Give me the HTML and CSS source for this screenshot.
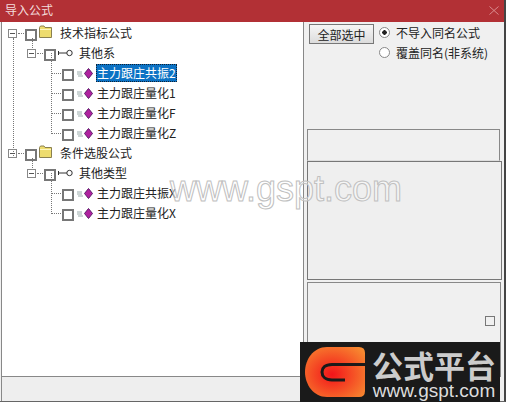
FILE: index.html
```html
<!DOCTYPE html>
<html lang="en">
<head>
    <meta charset="UTF-8">
    <title>导入公式</title>
    <link rel="stylesheet" href="styles.css">
</head>
<body>
    <svg class="defs" width="0" height="0">
        <symbol id="folder" viewBox="0 0 15 13">
            <path d="M1.500 12.500V2.500L2.500 1H6L7 2.500H13.500V12.500Z" fill="#eedc6e" stroke="#8a8050"/>
            <path d="M2 4H13V5H2Z" fill="#fdf6c0"/>
        </symbol>
        <symbol id="key" viewBox="0 0 15 8">
            <path d="M0.500 2V6M0.500 4H9" fill="none" stroke="#333"/>
            <circle cx="11.500" cy="4" r="2.700" fill="#fff" stroke="#333"/>
        </symbol>
        <symbol id="gem" viewBox="0 0 16 11">
            <path d="M0 4H5M0 6H5M1 8H6" stroke="#9aa" fill="none"/>
            <path d="M11.500 0.500L15.500 5.500L11.500 10.500L7.500 5.500Z" fill="#b0229f" stroke="#5c1a6a"/>
        </symbol>
    </svg>

    <div class="window">
        <div class="titlebar">
            <span class="title">导入公式</span>
            <svg class="close" width="10" height="9" viewBox="0 0 10 9"><path d="M0.500 0.500L9.500 8.500M9.500 0.500L0.500 8.500" stroke="#d98a8d"/></svg>
        </div>

        <div class="main">
            <div class="tree">
                <div class="row lvl0 top">
                    <span class="exp"></span><span class="check"></span>
                    <svg class="ico-folder"><use href="#folder"/></svg>
                    <span class="label">技术指标公式</span>
                </div>
                <div class="row lvl1 group">
                    <span class="exp"></span><span class="check"></span>
                    <svg class="ico-key"><use href="#key"/></svg>
                    <span class="label">其他系</span>
                </div>
                <div class="row lvl2">
                    <span class="check"></span><svg class="ico-gem"><use href="#gem"/></svg>
                    <span class="label selected">主力跟庄共振2</span>
                </div>
                <div class="row lvl2">
                    <span class="check"></span><svg class="ico-gem"><use href="#gem"/></svg>
                    <span class="label">主力跟庄量化1</span>
                </div>
                <div class="row lvl2">
                    <span class="check"></span><svg class="ico-gem"><use href="#gem"/></svg>
                    <span class="label">主力跟庄量化F</span>
                </div>
                <div class="row lvl2 last">
                    <span class="check"></span><svg class="ico-gem"><use href="#gem"/></svg>
                    <span class="label">主力跟庄量化Z</span>
                </div>
                <div class="row lvl0">
                    <span class="exp"></span><span class="check"></span>
                    <svg class="ico-folder"><use href="#folder"/></svg>
                    <span class="label">条件选股公式</span>
                </div>
                <div class="row lvl1 group">
                    <span class="exp"></span><span class="check"></span>
                    <svg class="ico-key"><use href="#key"/></svg>
                    <span class="label">其他类型</span>
                </div>
                <div class="row lvl2">
                    <span class="check"></span><svg class="ico-gem"><use href="#gem"/></svg>
                    <span class="label">主力跟庄共振X</span>
                </div>
                <div class="row lvl2 last">
                    <span class="check"></span><svg class="ico-gem"><use href="#gem"/></svg>
                    <span class="label">主力跟庄量化X</span>
                </div>
            </div>

            <div class="side">
                <div class="actions">
                    <button class="btn">全部选中</button>
                    <div class="radios">
                        <div class="radio-row"><span class="radio on"></span>不导入同名公式</div>
                        <div class="radio-row"><span class="radio"></span>覆盖同名(非系统)</div>
                    </div>
                </div>
                <div class="box box-a"></div>
                <div class="box box-b"></div>
                <div class="box box-c"><span class="small-check"></span></div>
            </div>
        </div>

        <div class="statusbar"></div>
    </div>

    <div class="wm wm1">分析家公式网www.70822.com&nbsp;&nbsp;分析家公式网</div>
    <div class="wm wm2">分析家公式网www.70822.com&nbsp;&nbsp;分析家公式网</div>
    <div class="wm wm3">分析家公式网www.70822.com&nbsp;&nbsp;分析家公式网</div>
    <div class="wm wm4">分析家公式网www.70822.com&nbsp;&nbsp;分析家公式网</div>
    <div class="wm wm5">分析家公式网www.70822.com&nbsp;&nbsp;分析家公式网</div>
    <div class="gspt">www.gspt.com</div>

    <div class="brand">
        <svg class="brand-g" width="60" height="50" viewBox="0 0 60 50">
            <defs>
                <radialGradient id="glow" cx="0.45" cy="0.55" r="0.7">
                    <stop offset="0" stop-color="#f3141a"/>
                    <stop offset="1" stop-color="#f78a30"/>
                </radialGradient>
            </defs>
            <path d="M22 0H54Q60 0 60 6V44Q60 50 54 50H22C8 50 0 37 0 25C0 13 8 0 22 0Z" fill="url(#glow)"/>
            <path d="M60 17.500H27C20 17.500 17 21 17 25C17 29 20 33 27 33H40" fill="none" stroke="#1a1a1a" stroke-width="3"/>
        </svg>
        <div class="brand-text">
            <div class="brand-name">公式平台</div>
            <div class="brand-url">www.gspt.com</div>
        </div>
    </div>
</body>
</html>
```

FILE: styles.css
```css
html, body {
    margin: 0;
    padding: 0;
    background: #fff;
}

body {
    width: 510px;
    height: 405px;
    position: relative;
    overflow: hidden;
    font-family: "Noto Sans CJK SC", "Liberation Sans", sans-serif;
    font-size: 12px;
    color: #222;
}

.defs {
    position: absolute;
}

.window {
    width: 504px;
    height: 401px;
    display: flex;
    flex-direction: column;
    border-right: 2px solid #444;
    border-bottom: 1px solid #666;
    background: #f0f0f0;
}

.titlebar {
    height: 22px;
    flex: none;
    background: #b23035;
    display: flex;
    align-items: center;
    justify-content: space-between;
    padding: 0 4px 2px 5px;
    box-sizing: border-box;
    color: #f3dcdc;
}

.title {
    font-size: 12px;
    line-height: 18px;
}

.close {
    margin-right: 1px;
}

.main {
    flex: 1;
    display: flex;
    min-height: 0;
}

.tree {
    width: 301px;
    flex: none;
    margin-left: 1px;
    background: #fff;
    border-left: 1px solid #888;
    border-right: 1px solid #888;
    border-bottom: 1px solid #888;
    padding-top: 1px;
    overflow: hidden;
}

.row {
    height: 20px;
    display: flex;
    align-items: center;
    position: relative;
}

.lvl0 { padding-left: 6px; }
.lvl1 { padding-left: 25px; }
.lvl2 { padding-left: 60px; }

.exp {
    width: 9px;
    height: 9px;
    border: 1px solid #888;
    box-sizing: border-box;
    background: linear-gradient(#555, #555) center / 5px 1px no-repeat;
    margin-right: 8px;
    margin-top: 1px;
    flex: none;
}

.check {
    width: 12px;
    height: 12px;
    border: 2px solid #777;
    box-sizing: border-box;
    background: #fff;
    margin-top: 4px;
    flex: none;
}

.ico-folder {
    width: 15px;
    height: 13px;
    margin: -3px 0 0 1px;
    flex: none;
}

.ico-key {
    width: 15px;
    height: 8px;
    margin: -1px 0 0 2px;
    flex: none;
}

.ico-gem {
    width: 16px;
    height: 11px;
    margin: 0 0 0 3px;
    flex: none;
}

.label {
    line-height: 18px;
    padding: 0 1px;
    white-space: nowrap;
}

.lvl0 .label { margin-left: 6px; }
.lvl1 .label { margin-left: 5px; }
.lvl2 .label { margin-left: 3px; }

.selected {
    background: #0c72c4;
    color: #fff;
    outline: 1px dotted #123;
    outline-offset: -1px;
}

/* dotted tree lines */
.lvl0::before,
.lvl1::before,
.lvl2::before {
    content: "";
    position: absolute;
    border-top: 1px dotted #777;
    top: 10px;
    height: 0;
}

.lvl0::before { left: 16px; width: 8px; }
.lvl1::before { left: 35px; width: 8px; }

.lvl2::before {
    left: 49px;
    width: 11px;
    top: -10px;
    height: 20px;
    border-top: none;
    border-left: 1px dotted #777;
    border-bottom: 1px dotted #777;
}

.top::after {
    content: "";
    position: absolute;
    left: 11px;
    top: 15px;
    height: 120px;
    border-left: 1px dotted #777;
}

.group::after {
    content: "";
    position: absolute;
    left: 30px;
    top: -5px;
    height: 10px;
    border-left: 1px dotted #777;
}

.side {
    flex: 1;
    min-width: 0;
    display: flex;
    flex-direction: column;
    padding: 2px 2px 0 3px;
}

.actions {
    display: flex;
    flex: none;
    height: 105px;
    align-items: flex-start;
    padding-left: 2px;
}

.btn {
    width: 65px;
    height: 20px;
    padding: 0;
    font: inherit;
    color: #222;
    border: 1px solid #777;
    background: linear-gradient(#f6f6f6, #dcdcdc);
}

.radios {
    margin-left: 5px;
    margin-top: -2px;
}

.radio-row {
    display: flex;
    align-items: center;
    height: 20px;
    white-space: nowrap;
}

.radio {
    width: 11px;
    height: 11px;
    border: 1px solid #888;
    border-radius: 50%;
    box-sizing: border-box;
    background: #fff;
    margin-right: 6px;
    flex: none;
}

.radio.on {
    background: radial-gradient(circle, #222 0 2px, #fff 2.500px);
}

.box {
    border: 1px solid #888;
    box-sizing: border-box;
    flex: none;
}

.box-a {
    height: 32px;
    margin-right: 2px;
    border-bottom-color: #ddd;
}

.box-b {
    height: 119px;
    border-color: #777;
    background: #efefef;
}

.box-c {
    height: 95px;
    margin-top: 2px;
    margin-right: 1px;
    position: relative;
}

.small-check {
    position: absolute;
    top: 33px;
    right: 5px;
    width: 10px;
    height: 10px;
    border: 1px solid #777;
    box-sizing: border-box;
}

.statusbar {
    height: 24px;
    flex: none;
    background: #eee;
    border-left: 1px solid #888;
    margin-left: 1px;
}

/* watermark of the source site lies over the whole picture */
.wm {
    position: absolute;
    left: 6px;
    font-family: "Liberation Sans", "Noto Sans CJK SC", sans-serif;
    font-size: 24px;
    line-height: 30px;
    white-space: nowrap;
    color: rgba(0, 0, 0, 0.018);
    pointer-events: none;
}

.wm1 { top: 50px; }
.wm2 { top: 133px; }
.wm3 { top: 216px; }
.wm4 { top: 298px; }
.wm5 { top: 372px; }

.gspt {
    position: absolute;
    left: 170px;
    top: 168px;
    font-family: "Liberation Sans", sans-serif;
    font-size: 36px;
    line-height: 42px;
    white-space: nowrap;
    color: rgba(255, 255, 255, 0.4);
    -webkit-text-stroke: 1px #c0c0c0;
    pointer-events: none;
}

.brand {
    position: absolute;
    left: 300px;
    top: 342px;
    width: 200px;
    height: 60px;
    background: #1a1a1a;
    display: flex;
    align-items: center;
    padding-left: 5px;
    box-sizing: border-box;
}

.brand-text {
    margin-left: 7px;
    text-align: center;
}

.brand-name {
    font-size: 31px;
    line-height: 38px;
    font-weight: 700;
    color: #ccc;
    white-space: nowrap;
}

.brand-url {
    font-family: "Liberation Sans", sans-serif;
    font-size: 19px;
    line-height: 14px;
    color: #ddd;
    white-space: nowrap;
}
```
